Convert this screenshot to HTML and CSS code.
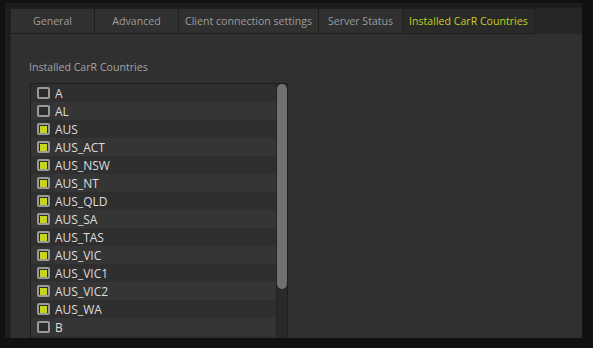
FILE: index.html
```html
<!DOCTYPE html>
<html>
<head>
<meta charset="utf-8">
<link rel="stylesheet" href="styles.css">
</head>
<body>
<div class="window">
  <div class="tabs">
    <div class="tab">General</div>
    <div class="tab">Advanced</div>
    <div class="tab">Client connection settings</div>
    <div class="tab">Server Status</div>
    <div class="tab active">Installed CarR Countries</div>
  </div>
  <div class="content">
    <div class="label">Installed CarR Countries</div>
    <div class="list">
      <div class="rows">
        <div class="row"><span class="box"></span>A</div>
        <div class="row"><span class="box"></span>AL</div>
        <div class="row"><span class="box on"></span>AUS</div>
        <div class="row"><span class="box on"></span>AUS_ACT</div>
        <div class="row"><span class="box on"></span>AUS_NSW</div>
        <div class="row"><span class="box on"></span>AUS_NT</div>
        <div class="row"><span class="box on"></span>AUS_QLD</div>
        <div class="row"><span class="box on"></span>AUS_SA</div>
        <div class="row"><span class="box on"></span>AUS_TAS</div>
        <div class="row"><span class="box on"></span>AUS_VIC</div>
        <div class="row"><span class="box on"></span>AUS_VIC1</div>
        <div class="row"><span class="box on"></span>AUS_VIC2</div>
        <div class="row"><span class="box on"></span>AUS_WA</div>
        <div class="row"><span class="box"></span>B</div>
        <div class="row"></div>
      </div>
      <div class="scrollbar"><div class="thumb"></div></div>
    </div>
  </div>
</div>
</body>
</html>
```
FILE: styles.css
```css
html, body {
  margin: 0;
  padding: 0;
  background: #111111;
  overflow: hidden;
}
body {
  width: 593px;
  height: 348px;
  font-family: "Open Sans", "Noto Sans", sans-serif;
  font-size: 10.6px;
}
.window {
  margin: 3px 0 0 5px;
  width: 577px;
  height: 335px;
  background: #1d1d1d;
  padding: 5px 0 0 5px;
  box-sizing: border-box;
  display: flex;
  flex-direction: column;
}
.tabs {
  display: flex;
  height: 26px;
  background: #262626;
}
.tab {
  box-sizing: border-box;
  min-width: 84px;
  padding: 0 6px;
  height: 26px;
  display: flex;
  align-items: center;
  justify-content: center;
  background: #303030;
  color: #9c9c9c;
  border-top: 1px solid #1f1f1f;
  border-left: 1px solid #1f1f1f;
  border-bottom: 1px solid #1f1f1f;
  white-space: nowrap;
}
.tab:last-child {
  border-right: 1px solid #1f1f1f;
}
.tab.active {
  background: #292929;
  color: #c3d21a;
}
.content {
  flex: 1;
  background: #303030;
  border-left: 1px solid #262626;
  padding: 25px 0 0 18px;
  overflow: hidden;
}
.label {
  color: #a4a4a4;
  height: 16px;
  line-height: 16px;
}
.list {
  margin: 8px 0 0 1px;
  width: 258px;
  height: 300px;
  box-sizing: border-box;
  border: 1px solid #1e1e1e;
  display: flex;
  overflow: hidden;
}
.rows {
  flex: 1;
  overflow: hidden;
}
.row {
  height: 18px;
  display: flex;
  align-items: center;
  color: #dcdcdc;
  font-size: 12px;
  background: #2f2f2f;
}
.row:nth-child(even) {
  background: #353535;
}
.box {
  box-sizing: border-box;
  width: 13px;
  height: 12px;
  margin: 0 5px 0 6px;
  border: 2px solid #9a9a9a;
  border-radius: 2px;
  background: #2b2b2b;
  display: flex;
  align-items: center;
  justify-content: center;
}
.box.on::after {
  content: "";
  width: 7px;
  height: 7px;
  background: #c6d41c;
}
.scrollbar {
  width: 10px;
  background: #292929;
  border-left: 1px solid #252525;
}
.thumb {
  height: 205px;
  background: #707070;
  border-radius: 5px;
}
```
